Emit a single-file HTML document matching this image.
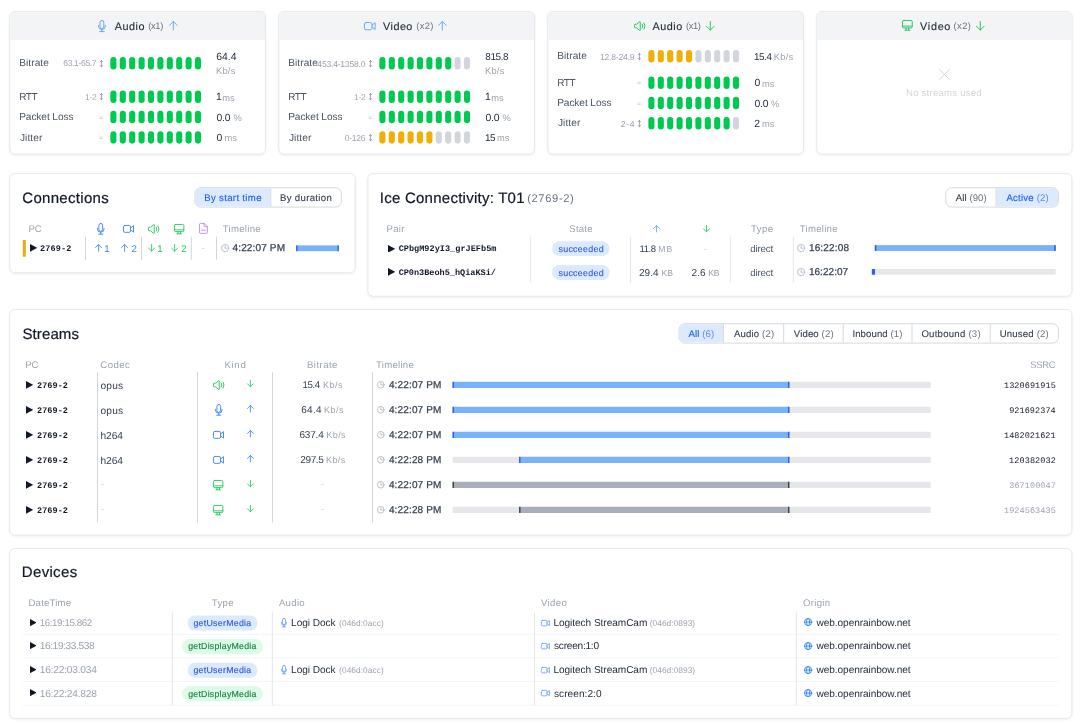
<!DOCTYPE html>
<html><head><meta charset="utf-8"><title>WebRTC dashboard</title>
<style>
html,body{margin:0;padding:0;background:#fff;}
body{width:1080px;height:725px;position:relative;overflow:hidden;font-family:"Liberation Sans",sans-serif;opacity:.999;}
.a{position:absolute;display:block;}
.t{white-space:nowrap;line-height:1;text-rendering:geometricPrecision;}
</style></head><body>
<svg class="a" style="left:7px;top:9px;filter:drop-shadow(0 1px 1px rgba(0,0,0,.06))" width="263" height="151"><rect x="2.8" y="2.4" width="255.7" height="142.7" rx="5" fill="#fff" stroke="#e6e8ec" stroke-width="1"/><path d="M3.3 30.8v-23.4a4.5 4.5 0 0 1 4.5 -4.5h245.7a4.5 4.5 0 0 1 4.5 4.5v23.4z" fill="#f3f4f6"/></svg>
<svg class="a" style="left:98px;top:19.87px;overflow:visible" width="7.8" height="12.06" viewBox="0 0 7.5 11.6" fill="none" stroke="#60a5fa" stroke-width="0.91" stroke-linecap="round" stroke-linejoin="round"><rect x="1.9" y="0.45" width="3.7" height="7.9" rx="1.85"/><path d="M0.45 5.3v0.6a3.3 3.3 0 0 0 6.6 0v-0.6M3.75 9.2v1.95M1.6 11.15h4.3"/></svg>
<span class="a t" id="t1" style="left:114.8px;top:21.52px;font-size:10.8px;color:#1f2937;-webkit-text-stroke:0.12px #1f2937;letter-spacing:0.52px;">Audio</span>
<span class="a t" id="t2" style="left:148.34px;top:21.74px;font-size:9.34px;color:#6b7280;letter-spacing:-0.38px;">(x1)</span>
<svg class="a" style="left:168.55px;top:21px;overflow:visible" width="8.6" height="9.6" viewBox="0 0 8.6 9.6" fill="none" stroke="#60a5fa" stroke-width="0.95" stroke-linecap="round" stroke-linejoin="round"><path d="M4.3 9.1V0.5M0.5 4.3L4.3 0.5L8.1 4.3"/></svg>
<span class="a t" id="t3" style="left:19.19px;top:58.57px;font-size:10.1px;color:#4b5563;letter-spacing:0.08px;">Bitrate</span>
<svg class="a" style="left:100.4px;top:59.6px;overflow:visible" width="2.9" height="7.3" viewBox="0 0 2.9 7.3" fill="none" stroke="#858b96" stroke-width="0.75" stroke-linecap="round" stroke-linejoin="round"><path d="M1.45 0.5v6.3M0.4 1.75L1.45 0.5L2.5 1.75M0.4 5.55L1.45 6.8L2.5 5.55"/></svg>
<span class="a t" id="t4" style="left:63.27px;top:59.33px;font-size:8.54px;color:#9ca3af;letter-spacing:-0.34px;">63.1-65.7</span>
<svg class="a" style="left:109px;top:56px" width="94" height="16"><rect x="1.35" y="1.05" width="6.1" height="12.5" rx="3.05" fill="#00c950"/><rect x="10.75" y="1.05" width="6.1" height="12.5" rx="3.05" fill="#00c950"/><rect x="20.15" y="1.05" width="6.1" height="12.5" rx="3.05" fill="#00c950"/><rect x="29.55" y="1.05" width="6.1" height="12.5" rx="3.05" fill="#00c950"/><rect x="38.95" y="1.05" width="6.1" height="12.5" rx="3.05" fill="#00c950"/><rect x="48.35" y="1.05" width="6.1" height="12.5" rx="3.05" fill="#00c950"/><rect x="57.75" y="1.05" width="6.1" height="12.5" rx="3.05" fill="#00c950"/><rect x="67.15" y="1.05" width="6.1" height="12.5" rx="3.05" fill="#00c950"/><rect x="76.55" y="1.05" width="6.1" height="12.5" rx="3.05" fill="#00c950"/><rect x="85.95" y="1.05" width="6.1" height="12.5" rx="3.05" fill="#00c950"/></svg>
<span class="a t" id="t5" style="left:216.18px;top:52.62px;font-size:10.4px;color:#1f2937;letter-spacing:0.05px;">64.4</span>
<span class="a t" id="t6" style="left:215.96px;top:66.71px;font-size:9.3px;color:#9ca3af;letter-spacing:0.24px;">Kb/s</span>
<span class="a t" id="t7" style="left:19.2px;top:92.6px;font-size:10.03px;color:#4b5563;letter-spacing:-0.4px;">RTT</span>
<svg class="a" style="left:100.4px;top:93.1px;overflow:visible" width="2.9" height="7.3" viewBox="0 0 2.9 7.3" fill="none" stroke="#858b96" stroke-width="0.75" stroke-linecap="round" stroke-linejoin="round"><path d="M1.45 0.5v6.3M0.4 1.75L1.45 0.5L2.5 1.75M0.4 5.55L1.45 6.8L2.5 5.55"/></svg>
<span class="a t" id="t8" style="left:85.11px;top:92.89px;font-size:8.42px;color:#9ca3af;letter-spacing:-0.34px;">1-2</span>
<svg class="a" style="left:109px;top:89px" width="94" height="16"><rect x="1.35" y="1.55" width="6.1" height="12.5" rx="3.05" fill="#00c950"/><rect x="10.75" y="1.55" width="6.1" height="12.5" rx="3.05" fill="#00c950"/><rect x="20.15" y="1.55" width="6.1" height="12.5" rx="3.05" fill="#00c950"/><rect x="29.55" y="1.55" width="6.1" height="12.5" rx="3.05" fill="#00c950"/><rect x="38.95" y="1.55" width="6.1" height="12.5" rx="3.05" fill="#00c950"/><rect x="48.35" y="1.55" width="6.1" height="12.5" rx="3.05" fill="#00c950"/><rect x="57.75" y="1.55" width="6.1" height="12.5" rx="3.05" fill="#00c950"/><rect x="67.15" y="1.55" width="6.1" height="12.5" rx="3.05" fill="#00c950"/><rect x="76.55" y="1.55" width="6.1" height="12.5" rx="3.05" fill="#00c950"/><rect x="85.95" y="1.55" width="6.1" height="12.5" rx="3.05" fill="#00c950"/></svg>
<span class="a t" id="t9" style="left:215.97px;top:92.92px;font-size:10.4px;color:#1f2937;">1</span>
<span class="a t" id="t10" style="left:222.24px;top:93.66px;font-size:9.3px;color:#9ca3af;letter-spacing:0.04px;">ms</span>
<span class="a t" id="t11" style="left:19.19px;top:112.62px;font-size:10.1px;color:#4b5563;letter-spacing:-0.07px;">Packet Loss</span>
<span class="a t" id="t12" style="left:99.34px;top:115.58px;font-size:6.6px;color:#b4b9c2;">=</span>
<svg class="a" style="left:109px;top:109px" width="94" height="16"><rect x="1.35" y="1.85" width="6.1" height="12.5" rx="3.05" fill="#00c950"/><rect x="10.75" y="1.85" width="6.1" height="12.5" rx="3.05" fill="#00c950"/><rect x="20.15" y="1.85" width="6.1" height="12.5" rx="3.05" fill="#00c950"/><rect x="29.55" y="1.85" width="6.1" height="12.5" rx="3.05" fill="#00c950"/><rect x="38.95" y="1.85" width="6.1" height="12.5" rx="3.05" fill="#00c950"/><rect x="48.35" y="1.85" width="6.1" height="12.5" rx="3.05" fill="#00c950"/><rect x="57.75" y="1.85" width="6.1" height="12.5" rx="3.05" fill="#00c950"/><rect x="67.15" y="1.85" width="6.1" height="12.5" rx="3.05" fill="#00c950"/><rect x="76.55" y="1.85" width="6.1" height="12.5" rx="3.05" fill="#00c950"/><rect x="85.95" y="1.85" width="6.1" height="12.5" rx="3.05" fill="#00c950"/></svg>
<span class="a t" id="t13" style="left:216.39px;top:113.72px;font-size:10.4px;color:#1f2937;letter-spacing:-0.09px;">0.0</span>
<span class="a t" id="t14" style="left:233.52px;top:113.71px;font-size:9.3px;color:#9ca3af;">%</span>
<span class="a t" id="t15" style="left:19.9px;top:133.67px;font-size:10.1px;color:#4b5563;letter-spacing:0.11px;">Jitter</span>
<span class="a t" id="t16" style="left:99.34px;top:135.63px;font-size:6.6px;color:#b4b9c2;">=</span>
<svg class="a" style="left:109px;top:130px" width="94" height="16"><rect x="1.35" y="1.15" width="6.1" height="12.5" rx="3.05" fill="#00c950"/><rect x="10.75" y="1.15" width="6.1" height="12.5" rx="3.05" fill="#00c950"/><rect x="20.15" y="1.15" width="6.1" height="12.5" rx="3.05" fill="#00c950"/><rect x="29.55" y="1.15" width="6.1" height="12.5" rx="3.05" fill="#00c950"/><rect x="38.95" y="1.15" width="6.1" height="12.5" rx="3.05" fill="#00c950"/><rect x="48.35" y="1.15" width="6.1" height="12.5" rx="3.05" fill="#00c950"/><rect x="57.75" y="1.15" width="6.1" height="12.5" rx="3.05" fill="#00c950"/><rect x="67.15" y="1.15" width="6.1" height="12.5" rx="3.05" fill="#00c950"/><rect x="76.55" y="1.15" width="6.1" height="12.5" rx="3.05" fill="#00c950"/><rect x="85.95" y="1.15" width="6.1" height="12.5" rx="3.05" fill="#00c950"/></svg>
<span class="a t" id="t17" style="left:216.39px;top:133.77px;font-size:10.4px;color:#1f2937;">0</span>
<span class="a t" id="t18" style="left:224.44px;top:134.26px;font-size:9.3px;color:#9ca3af;letter-spacing:0.04px;">ms</span>
<svg class="a" style="left:276px;top:9px;filter:drop-shadow(0 1px 1px rgba(0,0,0,.06))" width="263" height="151"><rect x="2.8" y="2.4" width="255.7" height="142.7" rx="5" fill="#fff" stroke="#e6e8ec" stroke-width="1"/><path d="M3.3 30.8v-23.4a4.5 4.5 0 0 1 4.5 -4.5h245.7a4.5 4.5 0 0 1 4.5 4.5v23.4z" fill="#f3f4f6"/></svg>
<svg class="a" style="left:363.77px;top:21.77px;overflow:visible" width="11.66" height="8.27" viewBox="0 0 11 7.8" fill="none" stroke="#60a5fa" stroke-width="0.9" stroke-linecap="round" stroke-linejoin="round"><rect x="0.45" y="0.45" width="7.1" height="6.9" rx="1.5"/><path d="M7.55 3.0L10.5 0.65V7.15L7.55 4.8"/></svg>
<span class="a t" id="t19" style="left:383px;top:21.52px;font-size:10.8px;color:#1f2937;-webkit-text-stroke:0.12px #1f2937;letter-spacing:0.49px;">Video</span>
<span class="a t" id="t20" style="left:416.24px;top:21.21px;font-size:9.4px;color:#6b7280;letter-spacing:0.36px;">(x2)</span>
<svg class="a" style="left:438.2px;top:21px;overflow:visible" width="8.6" height="9.6" viewBox="0 0 8.6 9.6" fill="none" stroke="#60a5fa" stroke-width="0.95" stroke-linecap="round" stroke-linejoin="round"><path d="M4.3 9.1V0.5M0.5 4.3L4.3 0.5L8.1 4.3"/></svg>
<span class="a t" id="t21" style="left:288.19px;top:58.57px;font-size:10.1px;color:#4b5563;letter-spacing:0.08px;">Bitrate</span>
<svg class="a" style="left:369.4px;top:59.6px;overflow:visible" width="2.9" height="7.3" viewBox="0 0 2.9 7.3" fill="none" stroke="#858b96" stroke-width="0.75" stroke-linecap="round" stroke-linejoin="round"><path d="M1.45 0.5v6.3M0.4 1.75L1.45 0.5L2.5 1.75M0.4 5.55L1.45 6.8L2.5 5.55"/></svg>
<span class="a t" id="t22" style="left:317.33px;top:59.55px;font-size:8.6px;color:#9ca3af;letter-spacing:-0.23px;">453.4-1358.0</span>
<svg class="a" style="left:378px;top:56px" width="94" height="16"><rect x="1.35" y="1.05" width="6.1" height="12.5" rx="3.05" fill="#00c950"/><rect x="10.75" y="1.05" width="6.1" height="12.5" rx="3.05" fill="#00c950"/><rect x="20.15" y="1.05" width="6.1" height="12.5" rx="3.05" fill="#00c950"/><rect x="29.55" y="1.05" width="6.1" height="12.5" rx="3.05" fill="#00c950"/><rect x="38.95" y="1.05" width="6.1" height="12.5" rx="3.05" fill="#00c950"/><rect x="48.35" y="1.05" width="6.1" height="12.5" rx="3.05" fill="#00c950"/><rect x="57.75" y="1.05" width="6.1" height="12.5" rx="3.05" fill="#00c950"/><rect x="67.15" y="1.05" width="6.1" height="12.5" rx="3.05" fill="#00c950"/><rect x="76.55" y="1.05" width="6.1" height="12.5" rx="3.05" fill="#d1d5dc"/><rect x="85.95" y="1.05" width="6.1" height="12.5" rx="3.05" fill="#d1d5dc"/></svg>
<span class="a t" id="t23" style="left:485.3px;top:52.59px;font-size:9.96px;color:#1f2937;letter-spacing:-0.42px;">815.8</span>
<span class="a t" id="t24" style="left:484.96px;top:66.71px;font-size:9.3px;color:#9ca3af;letter-spacing:0.24px;">Kb/s</span>
<span class="a t" id="t25" style="left:288.2px;top:92.6px;font-size:10.03px;color:#4b5563;letter-spacing:-0.4px;">RTT</span>
<svg class="a" style="left:369.4px;top:93.1px;overflow:visible" width="2.9" height="7.3" viewBox="0 0 2.9 7.3" fill="none" stroke="#858b96" stroke-width="0.75" stroke-linecap="round" stroke-linejoin="round"><path d="M1.45 0.5v6.3M0.4 1.75L1.45 0.5L2.5 1.75M0.4 5.55L1.45 6.8L2.5 5.55"/></svg>
<span class="a t" id="t26" style="left:354.11px;top:92.89px;font-size:8.42px;color:#9ca3af;letter-spacing:-0.34px;">1-2</span>
<svg class="a" style="left:378px;top:89px" width="94" height="16"><rect x="1.35" y="1.55" width="6.1" height="12.5" rx="3.05" fill="#00c950"/><rect x="10.75" y="1.55" width="6.1" height="12.5" rx="3.05" fill="#00c950"/><rect x="20.15" y="1.55" width="6.1" height="12.5" rx="3.05" fill="#00c950"/><rect x="29.55" y="1.55" width="6.1" height="12.5" rx="3.05" fill="#00c950"/><rect x="38.95" y="1.55" width="6.1" height="12.5" rx="3.05" fill="#00c950"/><rect x="48.35" y="1.55" width="6.1" height="12.5" rx="3.05" fill="#00c950"/><rect x="57.75" y="1.55" width="6.1" height="12.5" rx="3.05" fill="#00c950"/><rect x="67.15" y="1.55" width="6.1" height="12.5" rx="3.05" fill="#00c950"/><rect x="76.55" y="1.55" width="6.1" height="12.5" rx="3.05" fill="#00c950"/><rect x="85.95" y="1.55" width="6.1" height="12.5" rx="3.05" fill="#00c950"/></svg>
<span class="a t" id="t27" style="left:484.97px;top:92.92px;font-size:10.4px;color:#1f2937;">1</span>
<span class="a t" id="t28" style="left:491.24px;top:93.66px;font-size:9.3px;color:#9ca3af;letter-spacing:0.04px;">ms</span>
<span class="a t" id="t29" style="left:288.19px;top:112.62px;font-size:10.1px;color:#4b5563;letter-spacing:-0.07px;">Packet Loss</span>
<span class="a t" id="t30" style="left:368.34px;top:115.58px;font-size:6.6px;color:#b4b9c2;">=</span>
<svg class="a" style="left:378px;top:109px" width="94" height="16"><rect x="1.35" y="1.85" width="6.1" height="12.5" rx="3.05" fill="#00c950"/><rect x="10.75" y="1.85" width="6.1" height="12.5" rx="3.05" fill="#00c950"/><rect x="20.15" y="1.85" width="6.1" height="12.5" rx="3.05" fill="#00c950"/><rect x="29.55" y="1.85" width="6.1" height="12.5" rx="3.05" fill="#00c950"/><rect x="38.95" y="1.85" width="6.1" height="12.5" rx="3.05" fill="#00c950"/><rect x="48.35" y="1.85" width="6.1" height="12.5" rx="3.05" fill="#00c950"/><rect x="57.75" y="1.85" width="6.1" height="12.5" rx="3.05" fill="#00c950"/><rect x="67.15" y="1.85" width="6.1" height="12.5" rx="3.05" fill="#00c950"/><rect x="76.55" y="1.85" width="6.1" height="12.5" rx="3.05" fill="#00c950"/><rect x="85.95" y="1.85" width="6.1" height="12.5" rx="3.05" fill="#00c950"/></svg>
<span class="a t" id="t31" style="left:485.39px;top:113.72px;font-size:10.4px;color:#1f2937;letter-spacing:-0.09px;">0.0</span>
<span class="a t" id="t32" style="left:502.52px;top:113.71px;font-size:9.3px;color:#9ca3af;">%</span>
<span class="a t" id="t33" style="left:288.9px;top:133.67px;font-size:10.1px;color:#4b5563;letter-spacing:0.11px;">Jitter</span>
<svg class="a" style="left:369.4px;top:133.7px;overflow:visible" width="2.9" height="7.3" viewBox="0 0 2.9 7.3" fill="none" stroke="#858b96" stroke-width="0.75" stroke-linecap="round" stroke-linejoin="round"><path d="M1.45 0.5v6.3M0.4 1.75L1.45 0.5L2.5 1.75M0.4 5.55L1.45 6.8L2.5 5.55"/></svg>
<span class="a t" id="t34" style="left:344.74px;top:133.65px;font-size:8.6px;color:#9ca3af;letter-spacing:-0.31px;">0-126</span>
<svg class="a" style="left:378px;top:130px" width="94" height="16"><rect x="1.35" y="1.15" width="6.1" height="12.5" rx="3.05" fill="#efaf04"/><rect x="10.75" y="1.15" width="6.1" height="12.5" rx="3.05" fill="#efaf04"/><rect x="20.15" y="1.15" width="6.1" height="12.5" rx="3.05" fill="#efaf04"/><rect x="29.55" y="1.15" width="6.1" height="12.5" rx="3.05" fill="#efaf04"/><rect x="38.95" y="1.15" width="6.1" height="12.5" rx="3.05" fill="#efaf04"/><rect x="48.35" y="1.15" width="6.1" height="12.5" rx="3.05" fill="#efaf04"/><rect x="57.75" y="1.15" width="6.1" height="12.5" rx="3.05" fill="#d1d5dc"/><rect x="67.15" y="1.15" width="6.1" height="12.5" rx="3.05" fill="#d1d5dc"/><rect x="76.55" y="1.15" width="6.1" height="12.5" rx="3.05" fill="#d1d5dc"/><rect x="85.95" y="1.15" width="6.1" height="12.5" rx="3.05" fill="#d1d5dc"/></svg>
<span class="a t" id="t35" style="left:485.01px;top:133.52px;font-size:9.88px;color:#1f2937;letter-spacing:-0.45px;">15</span>
<span class="a t" id="t36" style="left:496.94px;top:133.51px;font-size:9.3px;color:#9ca3af;letter-spacing:0.04px;">ms</span>
<svg class="a" style="left:545px;top:9px;filter:drop-shadow(0 1px 1px rgba(0,0,0,.06))" width="263" height="151"><rect x="2.8" y="2.4" width="255.7" height="142.7" rx="5" fill="#fff" stroke="#e6e8ec" stroke-width="1"/><path d="M3.3 30.8v-23.4a4.5 4.5 0 0 1 4.5 -4.5h245.7a4.5 4.5 0 0 1 4.5 4.5v23.4z" fill="#f3f4f6"/></svg>
<svg class="a" style="left:633.65px;top:20.85px;overflow:visible" width="11.9" height="10.1" viewBox="0 0 11.9 10.1" fill="none" stroke="#22c55e" stroke-width="0.95" stroke-linecap="round" stroke-linejoin="round"><path d="M0.5 3.75a0.5 0.5 0 0 1 0.5-0.5h1.55L5.7 0.6a0.35 0.35 0 0 1 0.55 0.3v8.3a0.35 0.35 0 0 1-0.55 0.3L2.55 6.85H1a0.5 0.5 0 0 1-0.5-0.5z"/><path d="M8.3 3.1q1.25 1.95 0 3.9M10.0 1.9q2.3 3.15 0 6.3"/></svg>
<span class="a t" id="t37" style="left:652.5px;top:21.52px;font-size:10.8px;color:#1f2937;-webkit-text-stroke:0.12px #1f2937;letter-spacing:0.52px;">Audio</span>
<span class="a t" id="t38" style="left:685.94px;top:21.74px;font-size:9.34px;color:#6b7280;letter-spacing:-0.38px;">(x1)</span>
<svg class="a" style="left:706.3px;top:21px;overflow:visible" width="8.6" height="9.6" viewBox="0 0 8.6 9.6" fill="none" stroke="#22c55e" stroke-width="0.95" stroke-linecap="round" stroke-linejoin="round"><path d="M4.3 0.5V9.1M0.5 5.3L4.3 9.1L8.1 5.3"/></svg>
<span class="a t" id="t39" style="left:557.19px;top:51.57px;font-size:10.1px;color:#4b5563;letter-spacing:0.08px;">Bitrate</span>
<svg class="a" style="left:638.4px;top:52.6px;overflow:visible" width="2.9" height="7.3" viewBox="0 0 2.9 7.3" fill="none" stroke="#858b96" stroke-width="0.75" stroke-linecap="round" stroke-linejoin="round"><path d="M1.45 0.5v6.3M0.4 1.75L1.45 0.5L2.5 1.75M0.4 5.55L1.45 6.8L2.5 5.55"/></svg>
<span class="a t" id="t40" style="left:599.9px;top:52.55px;font-size:8.6px;color:#9ca3af;letter-spacing:-0.2px;">12.8-24.9</span>
<svg class="a" style="left:647px;top:49px" width="94" height="16"><rect x="1.35" y="1.05" width="6.1" height="12.5" rx="3.05" fill="#efaf04"/><rect x="10.75" y="1.05" width="6.1" height="12.5" rx="3.05" fill="#efaf04"/><rect x="20.15" y="1.05" width="6.1" height="12.5" rx="3.05" fill="#efaf04"/><rect x="29.55" y="1.05" width="6.1" height="12.5" rx="3.05" fill="#efaf04"/><rect x="38.95" y="1.05" width="6.1" height="12.5" rx="3.05" fill="#efaf04"/><rect x="48.35" y="1.05" width="6.1" height="12.5" rx="3.05" fill="#d1d5dc"/><rect x="57.75" y="1.05" width="6.1" height="12.5" rx="3.05" fill="#d1d5dc"/><rect x="67.15" y="1.05" width="6.1" height="12.5" rx="3.05" fill="#d1d5dc"/><rect x="76.55" y="1.05" width="6.1" height="12.5" rx="3.05" fill="#d1d5dc"/><rect x="85.95" y="1.05" width="6.1" height="12.5" rx="3.05" fill="#d1d5dc"/></svg>
<span class="a t" id="t41" style="left:754.01px;top:52.67px;font-size:9.88px;color:#1f2937;letter-spacing:-0.45px;">15.4</span>
<span class="a t" id="t42" style="left:773.76px;top:52.66px;font-size:9.3px;color:#9ca3af;letter-spacing:0.3px;">Kb/s</span>
<span class="a t" id="t43" style="left:557.2px;top:78.5px;font-size:10.03px;color:#4b5563;letter-spacing:-0.4px;">RTT</span>
<span class="a t" id="t44" style="left:637.34px;top:80.68px;font-size:6.6px;color:#b4b9c2;">=</span>
<svg class="a" style="left:647px;top:75px" width="94" height="16"><rect x="1.35" y="1.45" width="6.1" height="12.5" rx="3.05" fill="#00c950"/><rect x="10.75" y="1.45" width="6.1" height="12.5" rx="3.05" fill="#00c950"/><rect x="20.15" y="1.45" width="6.1" height="12.5" rx="3.05" fill="#00c950"/><rect x="29.55" y="1.45" width="6.1" height="12.5" rx="3.05" fill="#00c950"/><rect x="38.95" y="1.45" width="6.1" height="12.5" rx="3.05" fill="#00c950"/><rect x="48.35" y="1.45" width="6.1" height="12.5" rx="3.05" fill="#00c950"/><rect x="57.75" y="1.45" width="6.1" height="12.5" rx="3.05" fill="#00c950"/><rect x="67.15" y="1.45" width="6.1" height="12.5" rx="3.05" fill="#00c950"/><rect x="76.55" y="1.45" width="6.1" height="12.5" rx="3.05" fill="#00c950"/><rect x="85.95" y="1.45" width="6.1" height="12.5" rx="3.05" fill="#00c950"/></svg>
<span class="a t" id="t45" style="left:754.39px;top:78.82px;font-size:10.4px;color:#1f2937;">0</span>
<span class="a t" id="t46" style="left:761.94px;top:79.56px;font-size:9.3px;color:#9ca3af;letter-spacing:0.04px;">ms</span>
<span class="a t" id="t47" style="left:557.19px;top:98.52px;font-size:10.1px;color:#4b5563;letter-spacing:-0.07px;">Packet Loss</span>
<span class="a t" id="t48" style="left:637.34px;top:101.73px;font-size:6.6px;color:#b4b9c2;">=</span>
<svg class="a" style="left:647px;top:95px" width="94" height="16"><rect x="1.35" y="1.75" width="6.1" height="12.5" rx="3.05" fill="#00c950"/><rect x="10.75" y="1.75" width="6.1" height="12.5" rx="3.05" fill="#00c950"/><rect x="20.15" y="1.75" width="6.1" height="12.5" rx="3.05" fill="#00c950"/><rect x="29.55" y="1.75" width="6.1" height="12.5" rx="3.05" fill="#00c950"/><rect x="38.95" y="1.75" width="6.1" height="12.5" rx="3.05" fill="#00c950"/><rect x="48.35" y="1.75" width="6.1" height="12.5" rx="3.05" fill="#00c950"/><rect x="57.75" y="1.75" width="6.1" height="12.5" rx="3.05" fill="#00c950"/><rect x="67.15" y="1.75" width="6.1" height="12.5" rx="3.05" fill="#00c950"/><rect x="76.55" y="1.75" width="6.1" height="12.5" rx="3.05" fill="#00c950"/><rect x="85.95" y="1.75" width="6.1" height="12.5" rx="3.05" fill="#00c950"/></svg>
<span class="a t" id="t49" style="left:754.39px;top:99.62px;font-size:10.4px;color:#1f2937;letter-spacing:-0.09px;">0.0</span>
<span class="a t" id="t50" style="left:771.02px;top:99.61px;font-size:9.3px;color:#9ca3af;">%</span>
<span class="a t" id="t51" style="left:557.9px;top:118.57px;font-size:10.1px;color:#4b5563;letter-spacing:0.11px;">Jitter</span>
<svg class="a" style="left:638.4px;top:119.6px;overflow:visible" width="2.9" height="7.3" viewBox="0 0 2.9 7.3" fill="none" stroke="#858b96" stroke-width="0.75" stroke-linecap="round" stroke-linejoin="round"><path d="M1.45 0.5v6.3M0.4 1.75L1.45 0.5L2.5 1.75M0.4 5.55L1.45 6.8L2.5 5.55"/></svg>
<span class="a t" id="t52" style="left:620.77px;top:119.55px;font-size:8.6px;color:#9ca3af;letter-spacing:0.61px;">2-4</span>
<svg class="a" style="left:647px;top:116px" width="94" height="16"><rect x="1.35" y="1.05" width="6.1" height="12.5" rx="3.05" fill="#00c950"/><rect x="10.75" y="1.05" width="6.1" height="12.5" rx="3.05" fill="#00c950"/><rect x="20.15" y="1.05" width="6.1" height="12.5" rx="3.05" fill="#00c950"/><rect x="29.55" y="1.05" width="6.1" height="12.5" rx="3.05" fill="#00c950"/><rect x="38.95" y="1.05" width="6.1" height="12.5" rx="3.05" fill="#00c950"/><rect x="48.35" y="1.05" width="6.1" height="12.5" rx="3.05" fill="#00c950"/><rect x="57.75" y="1.05" width="6.1" height="12.5" rx="3.05" fill="#00c950"/><rect x="67.15" y="1.05" width="6.1" height="12.5" rx="3.05" fill="#00c950"/><rect x="76.55" y="1.05" width="6.1" height="12.5" rx="3.05" fill="#00c950"/><rect x="85.95" y="1.05" width="6.1" height="12.5" rx="3.05" fill="#d1d5dc"/></svg>
<span class="a t" id="t53" style="left:754.18px;top:119.92px;font-size:10.4px;color:#1f2937;">2</span>
<span class="a t" id="t54" style="left:761.94px;top:120.41px;font-size:9.3px;color:#9ca3af;letter-spacing:0.04px;">ms</span>
<svg class="a" style="left:814px;top:9px;filter:drop-shadow(0 1px 1px rgba(0,0,0,.06))" width="263" height="151"><rect x="2.8" y="2.4" width="255.2" height="142.7" rx="5" fill="#fff" stroke="#e6e8ec" stroke-width="1"/><path d="M3.3 30.8v-23.4a4.5 4.5 0 0 1 4.5 -4.5h245.2a4.5 4.5 0 0 1 4.5 4.5v23.4z" fill="#f3f4f6"/></svg>
<svg class="a" style="left:901.99px;top:20.44px;overflow:visible" width="10.71" height="10.71" viewBox="0 0 10.3 10.3" fill="none" stroke="#22c55e" stroke-width="0.91" stroke-linecap="round" stroke-linejoin="round"><rect x="0.45" y="0.45" width="9.4" height="7.2" rx="1.2"/><path d="M0.45 5.85h9.4M3.9 7.65v1.9M6.4 7.65v1.9M2.8 9.85h4.7"/></svg>
<span class="a t" id="t55" style="left:920px;top:21.52px;font-size:10.8px;color:#1f2937;-webkit-text-stroke:0.12px #1f2937;letter-spacing:0.74px;">Video</span>
<span class="a t" id="t56" style="left:953.44px;top:21.21px;font-size:9.4px;color:#6b7280;letter-spacing:0.46px;">(x2)</span>
<svg class="a" style="left:976.25px;top:21.15px;overflow:visible" width="8.6" height="9.6" viewBox="0 0 8.6 9.6" fill="none" stroke="#22c55e" stroke-width="0.95" stroke-linecap="round" stroke-linejoin="round"><path d="M4.3 0.5V9.1M0.5 5.3L4.3 9.1L8.1 5.3"/></svg>
<svg class="a" style="left:938.5px;top:69px;overflow:visible" width="11" height="11" viewBox="0 0 11 11" fill="none" stroke="#d1d5db" stroke-width="0.9" stroke-linecap="round" stroke-linejoin="round"><path d="M0.5 0.5L10.5 10.5M10.5 0.5L0.5 10.5"/></svg>
<span class="a t" id="t57" style="left:905.98px;top:88.66px;font-size:9.6px;color:#d1d5db;letter-spacing:0.23px;">No streams used</span>
<svg class="a" style="left:7px;top:171px;filter:drop-shadow(0 1px 1px rgba(0,0,0,.06))" width="353" height="107"><rect x="2.7" y="2.6" width="345.5" height="99.1" rx="5" fill="#fff" stroke="#e6e8ec" stroke-width="1"/></svg>
<span class="a t" id="t58" style="left:22.25px;top:190.62px;font-size:15px;color:#111827;-webkit-text-stroke:0.2px #111827;letter-spacing:0.31px;">Connections</span>
<svg class="a" style="left:193px;top:186px;" width="151" height="24"><rect x="1.9" y="1.7" width="146.5" height="19.4" rx="6" fill="#fff" stroke="#d6d9df" stroke-width="1"/></svg>
<svg class="a" style="left:194px;top:187px;" width="79" height="22"><path d="M6.9 1.2h69.4a0 0 0 0 1 0 0v18.4a0 0 0 0 1 0 0h-69.4a5.5 5.5 0 0 1 -5.5 -5.5v-7.4a5.5 5.5 0 0 1 5.5 -5.5z" fill="#dbeafe"/></svg>
<svg class="a" style="left:269px;top:187px;" width="5" height="22"><rect x="1.3" y="1.2" width="1" height="18.4" fill="#d6d9df"/></svg>
<span class="a t" id="t59" style="left:204.23px;top:193.56px;font-size:9.6px;color:#2563eb;-webkit-text-stroke:0.15px #2563eb;letter-spacing:0.33px;">By start time</span>
<span class="a t" id="t60" style="left:280.03px;top:193.56px;font-size:9.6px;color:#374151;-webkit-text-stroke:0.12px #374151;letter-spacing:0.32px;">By duration</span>
<span class="a t" id="t61" style="left:28.43px;top:224.66px;font-size:9.6px;color:#9ca3af;letter-spacing:-0.16px;">PC</span>
<svg class="a" style="left:96.9px;top:222.6px;overflow:visible" width="7.5" height="11.6" viewBox="0 0 7.5 11.6" fill="none" stroke="#3b82f6" stroke-width="0.9" stroke-linecap="round" stroke-linejoin="round"><rect x="1.9" y="0.45" width="3.7" height="7.9" rx="1.85"/><path d="M0.45 5.3v0.6a3.3 3.3 0 0 0 6.6 0v-0.6M3.75 9.2v1.95M1.6 11.15h4.3"/></svg>
<svg class="a" style="left:123.1px;top:224.9px;overflow:visible" width="11" height="7.8" viewBox="0 0 11 7.8" fill="none" stroke="#3b82f6" stroke-width="0.9" stroke-linecap="round" stroke-linejoin="round"><rect x="0.45" y="0.45" width="7.1" height="6.9" rx="1.5"/><path d="M7.55 3.0L10.5 0.65V7.15L7.55 4.8"/></svg>
<svg class="a" style="left:148px;top:223.8px;overflow:visible" width="11.9" height="10.1" viewBox="0 0 11.9 10.1" fill="none" stroke="#22c55e" stroke-width="0.9" stroke-linecap="round" stroke-linejoin="round"><path d="M0.5 3.75a0.5 0.5 0 0 1 0.5-0.5h1.55L5.7 0.6a0.35 0.35 0 0 1 0.55 0.3v8.3a0.35 0.35 0 0 1-0.55 0.3L2.55 6.85H1a0.5 0.5 0 0 1-0.5-0.5z"/><path d="M8.3 3.1q1.25 1.95 0 3.9M10.0 1.9q2.3 3.15 0 6.3"/></svg>
<svg class="a" style="left:173.7px;top:223.6px;overflow:visible" width="10.3" height="10.3" viewBox="0 0 10.3 10.3" fill="none" stroke="#22c55e" stroke-width="0.9" stroke-linecap="round" stroke-linejoin="round"><rect x="0.45" y="0.45" width="9.4" height="7.2" rx="1.2"/><path d="M0.45 5.85h9.4M3.9 7.65v1.9M6.4 7.65v1.9M2.8 9.85h4.7"/></svg>
<svg class="a" style="left:199.4px;top:223.1px;overflow:visible" width="8.8" height="10.8" viewBox="0 0 8.8 10.8" fill="none" stroke="#c084fc" stroke-width="0.9" stroke-linecap="round" stroke-linejoin="round"><path d="M0.45 1.45a1 1 0 0 1 1-1h3.7L8.35 3.65v5.7a1 1 0 0 1-1 1h-5.9a1 1 0 0 1-1-1z"/><path d="M5.15 0.45v2.2a1 1 0 0 0 1 1h2.2M2.7 7.2h3.6"/></svg>
<span class="a t" id="t62" style="left:222.81px;top:224.66px;font-size:9.6px;color:#9ca3af;letter-spacing:0.27px;">Timeline</span>
<svg class="a" style="left:21px;top:239px;" width="7" height="20"><rect x="1.8" y="1" width="3" height="16.7" fill="#eda812"/></svg>
<svg class="a" style="left:29.7px;top:244.45px" width="7.1" height="7.7" viewBox="0 0 10 10" preserveAspectRatio="none"><path d="M0 0L10 5L0 10z" fill="#111827"/></svg>
<span class="a t" id="t63" style="left:39.99px;top:244.69px;font-size:8.5px;color:#111827;font-family:'Liberation Mono',monospace;font-weight:bold;letter-spacing:0.13px;">2769-2</span>
<svg class="a" style="left:84px;top:235px;" width="5" height="27"><rect x="1" y="1.7" width="1" height="23" fill="#d1d5db"/></svg>
<svg class="a" style="left:140px;top:235px;" width="5" height="27"><rect x="1" y="1.7" width="1" height="23" fill="#d1d5db"/></svg>
<svg class="a" style="left:189px;top:235px;" width="5" height="27"><rect x="1.8" y="1.7" width="1" height="23" fill="#d1d5db"/></svg>
<svg class="a" style="left:215px;top:235px;" width="5" height="27"><rect x="1" y="1.7" width="1" height="23" fill="#d1d5db"/></svg>
<svg class="a" style="left:94.9px;top:244.2px;overflow:visible" width="7.2" height="7.7" viewBox="0 0 7.2 7.7" fill="none" stroke="#3b82f6" stroke-width="0.85" stroke-linecap="round" stroke-linejoin="round"><path d="M3.6 7.25V0.55M0.5 3.65L3.6 0.55L6.7 3.65"/></svg>
<span class="a t" id="t64" style="left:104.22px;top:244.71px;font-size:9.7px;color:#3b82f6;">1</span>
<svg class="a" style="left:121.45px;top:244.2px;overflow:visible" width="7.2" height="7.7" viewBox="0 0 7.2 7.7" fill="none" stroke="#3b82f6" stroke-width="0.85" stroke-linecap="round" stroke-linejoin="round"><path d="M3.6 7.25V0.55M0.5 3.65L3.6 0.55L6.7 3.65"/></svg>
<span class="a t" id="t65" style="left:131.51px;top:244.71px;font-size:9.7px;color:#3b82f6;">2</span>
<svg class="a" style="left:147.85px;top:244.2px;overflow:visible" width="7.2" height="7.7" viewBox="0 0 7.2 7.7" fill="none" stroke="#22c55e" stroke-width="0.85" stroke-linecap="round" stroke-linejoin="round"><path d="M3.6 0.45V7.15M0.5 4.05L3.6 7.15L6.7 4.05"/></svg>
<span class="a t" id="t66" style="left:157.32px;top:244.71px;font-size:9.7px;color:#22c55e;">1</span>
<svg class="a" style="left:171.45px;top:244.2px;overflow:visible" width="7.2" height="7.7" viewBox="0 0 7.2 7.7" fill="none" stroke="#22c55e" stroke-width="0.85" stroke-linecap="round" stroke-linejoin="round"><path d="M3.6 0.45V7.15M0.5 4.05L3.6 7.15L6.7 4.05"/></svg>
<span class="a t" id="t67" style="left:181.31px;top:244.71px;font-size:9.7px;color:#22c55e;">2</span>
<span class="a t" id="t68" style="left:201.6px;top:243.52px;font-size:10px;color:#d1d5db;">-</span>
<svg class="a" style="left:220.6px;top:243.95px;overflow:visible" width="8.1" height="8.1" viewBox="0 0 8.1 8.1" fill="none" stroke="#adb3bd" stroke-width="0.8" stroke-linecap="round" stroke-linejoin="round"><circle cx="4.05" cy="4.05" r="3.6"/><path d="M4.05 1.9v2.35h1.9"/></svg>
<span class="a t" id="t69" style="left:232.5px;top:243.52px;font-size:10px;color:#374151;-webkit-text-stroke:0.25px #374151;letter-spacing:0.15px;">4:22:07 PM</span>
<svg class="a" style="left:292px;top:244px" width="49" height="8"><rect x="4.2" y="1.4" width="42.6" height="5.8" fill="#78b2fb"/><rect x="4.2" y="1.4" width="1.3" height="5.8" fill="#2d5cf3"/><rect x="45.5" y="1.4" width="1.3" height="5.8" fill="#2d5cf3"/></svg>
<svg class="a" style="left:365px;top:171px;filter:drop-shadow(0 1px 1px rgba(0,0,0,.06))" width="711" height="131"><rect x="2.9" y="2.6" width="704" height="122.6" rx="5" fill="#fff" stroke="#e6e8ec" stroke-width="1"/></svg>
<span class="a t" id="t70" style="left:379.75px;top:190.62px;font-size:15px;color:#111827;-webkit-text-stroke:0.2px #111827;letter-spacing:0.25px;">Ice Connectivity: T01</span>
<span class="a t" id="t71" style="left:527.13px;top:193.58px;font-size:11.2px;color:#6b7280;letter-spacing:0.63px;">(2769-2)</span>
<svg class="a" style="left:944px;top:186px;" width="118" height="24"><rect x="1.8" y="1.7" width="112.7" height="19.4" rx="6" fill="#fff" stroke="#d6d9df" stroke-width="1"/></svg>
<svg class="a" style="left:995px;top:187px;" width="66" height="22"><path d="M1.6 1.2h55.9a5.5 5.5 0 0 1 5.5 5.5v7.4a5.5 5.5 0 0 1 -5.5 5.5h-55.9a0 0 0 0 1 0 0v-18.4a0 0 0 0 1 0 0z" fill="#dbeafe"/></svg>
<svg class="a" style="left:994px;top:187px;" width="5" height="22"><rect x="1.6" y="1.2" width="1" height="18.4" fill="#d6d9df"/></svg>
<span class="a t" id="t72" style="left:955.8px;top:193.56px;font-size:9.6px;color:#374151;-webkit-text-stroke:0.12px #374151;letter-spacing:0.06px;">All <span style="color:#6b7280;-webkit-text-stroke:0">(90)</span></span>
<span class="a t" id="t73" style="left:1006.4px;top:193.56px;font-size:9.6px;color:#2563eb;-webkit-text-stroke:0.15px #2563eb;letter-spacing:0.21px;">Active <span style="color:#5b8df0;-webkit-text-stroke:0">(2)</span></span>
<span class="a t" id="t74" style="left:386.53px;top:224.66px;font-size:9.6px;color:#9ca3af;letter-spacing:0.31px;">Pair</span>
<span class="a t" id="t75" style="left:569.37px;top:224.66px;font-size:9.6px;color:#9ca3af;letter-spacing:0.2px;">State</span>
<svg class="a" style="left:652.54px;top:224.9px;overflow:visible" width="6.91" height="7.39" viewBox="0 0 7.2 7.7" fill="none" stroke="#60a5fa" stroke-width="0.89" stroke-linecap="round" stroke-linejoin="round"><path d="M3.6 7.25V0.55M0.5 3.65L3.6 0.55L6.7 3.65"/></svg>
<svg class="a" style="left:702.54px;top:224.9px;overflow:visible" width="6.91" height="7.39" viewBox="0 0 7.2 7.7" fill="none" stroke="#22c55e" stroke-width="0.89" stroke-linecap="round" stroke-linejoin="round"><path d="M3.6 0.45V7.15M0.5 4.05L3.6 7.15L6.7 4.05"/></svg>
<span class="a t" id="t76" style="left:750.96px;top:224.66px;font-size:9.6px;color:#9ca3af;letter-spacing:0.48px;">Type</span>
<span class="a t" id="t77" style="left:799.81px;top:224.66px;font-size:9.6px;color:#9ca3af;letter-spacing:0.26px;">Timeline</span>
<svg class="a" style="left:529px;top:235px;" width="5" height="50"><rect x="1.2" y="1.6" width="1" height="46.2" fill="#e5e7eb"/></svg>
<svg class="a" style="left:629px;top:235px;" width="5" height="50"><rect x="1.1" y="1.6" width="1" height="46.2" fill="#e5e7eb"/></svg>
<svg class="a" style="left:729px;top:235px;" width="5" height="50"><rect x="1.1" y="1.6" width="1" height="46.2" fill="#e5e7eb"/></svg>
<svg class="a" style="left:791px;top:235px;" width="5" height="50"><rect x="1.8" y="1.6" width="1" height="46.2" fill="#e5e7eb"/></svg>
<svg class="a" style="left:387.8px;top:244.55px" width="7.1" height="7.7" viewBox="0 0 10 10" preserveAspectRatio="none"><path d="M0 0L10 5L0 10z" fill="#111827"/></svg>
<span class="a t" id="t78" style="left:398.64px;top:244.86px;font-size:8.55px;color:#111827;font-family:'Liberation Mono',monospace;font-weight:bold;letter-spacing:0.02px;">CPbgM92yI3_grJEFb5m</span>
<svg class="a" style="left:551px;top:240px;" width="61" height="19"><rect x="1.1" y="1.2" width="57.6" height="14.9" rx="7.45" fill="#dbeafe"/></svg>
<span class="a t" id="t79" style="left:558.42px;top:244.6px;font-size:8.9px;color:#2f5ae0;-webkit-text-stroke:0.12px #2f5ae0;letter-spacing:0.3px;">succeeded</span>
<span class="a t" id="t80" style="left:639.54px;top:244.66px;font-size:9.5px;color:#374151;letter-spacing:-0.43px;">11.8</span>
<span class="a t" id="t81" style="left:658.31px;top:245px;font-size:8.6px;color:#9ca3af;letter-spacing:0.99px;">MB</span>
<span class="a t" id="t82" style="left:703.85px;top:244.72px;font-size:10px;color:#d1d5db;">-</span>
<span class="a t" id="t83" style="left:750.26px;top:244.61px;font-size:9.8px;color:#4b5563;letter-spacing:-0.18px;">direct</span>
<svg class="a" style="left:797.25px;top:244px;overflow:visible" width="8.1" height="8.1" viewBox="0 0 8.1 8.1" fill="none" stroke="#adb3bd" stroke-width="0.8" stroke-linecap="round" stroke-linejoin="round"><circle cx="4.05" cy="4.05" r="3.6"/><path d="M4.05 1.9v2.35h1.9"/></svg>
<span class="a t" id="t84" style="left:808.9px;top:243.52px;font-size:10px;color:#374151;-webkit-text-stroke:0.25px #374151;letter-spacing:0.18px;">16:22:08</span>
<svg class="a" style="left:387.8px;top:267.95px" width="7.1" height="7.7" viewBox="0 0 10 10" preserveAspectRatio="none"><path d="M0 0L10 5L0 10z" fill="#111827"/></svg>
<span class="a t" id="t85" style="left:398.64px;top:268.51px;font-size:8.55px;color:#111827;font-family:'Liberation Mono',monospace;font-weight:bold;letter-spacing:-0.01px;">CP0n3Beoh5_hQiaKSi/</span>
<svg class="a" style="left:551px;top:264px;" width="61" height="18"><rect x="1.1" y="1" width="57.6" height="14.9" rx="7.45" fill="#dbeafe"/></svg>
<span class="a t" id="t86" style="left:558.42px;top:268.65px;font-size:8.9px;color:#2f5ae0;-webkit-text-stroke:0.12px #2f5ae0;letter-spacing:0.3px;">succeeded</span>
<span class="a t" id="t87" style="left:639px;top:268.56px;font-size:10px;color:#374151;letter-spacing:0.03px;">29.4</span>
<span class="a t" id="t88" style="left:661.41px;top:268.65px;font-size:8.6px;color:#9ca3af;letter-spacing:0.12px;">KB</span>
<span class="a t" id="t89" style="left:691.6px;top:268.56px;font-size:10px;color:#374151;letter-spacing:0.03px;">2.6</span>
<span class="a t" id="t90" style="left:708.21px;top:268.65px;font-size:8.6px;color:#9ca3af;letter-spacing:-0.18px;">KB</span>
<span class="a t" id="t91" style="left:750.26px;top:268.51px;font-size:9.8px;color:#4b5563;letter-spacing:-0.18px;">direct</span>
<svg class="a" style="left:797.25px;top:267.6px;overflow:visible" width="8.1" height="8.1" viewBox="0 0 8.1 8.1" fill="none" stroke="#adb3bd" stroke-width="0.8" stroke-linecap="round" stroke-linejoin="round"><circle cx="4.05" cy="4.05" r="3.6"/><path d="M4.05 1.9v2.35h1.9"/></svg>
<span class="a t" id="t92" style="left:808.9px;top:267.67px;font-size:10px;color:#374151;-webkit-text-stroke:0.25px #374151;letter-spacing:0.05px;">16:22:07</span>
<svg class="a" style="left:870px;top:244px" width="188" height="8"><rect x="4.8" y="1.15" width="180.9" height="5.8" fill="#78b2fb"/><rect x="4.8" y="1.15" width="1.5" height="5.8" fill="#2d5cf3"/><rect x="184.2" y="1.15" width="1.5" height="5.8" fill="#2d5cf3"/></svg>
<svg class="a" style="left:870px;top:267px" width="188" height="8"><rect x="4.8" y="1.9" width="180.9" height="5.8" rx="0.6" fill="#e5e7eb"/></svg>
<svg class="a" style="left:870px;top:267px;" width="8" height="10"><rect x="1.8" y="1.9" width="3.2" height="5.8" rx="0.5" fill="#2d5cf3"/></svg>
<svg class="a" style="left:7px;top:307px;filter:drop-shadow(0 1px 1px rgba(0,0,0,.06))" width="1069" height="234"><rect x="2.7" y="2.5" width="1062.2" height="225.7" rx="5" fill="#fff" stroke="#e6e8ec" stroke-width="1"/></svg>
<span class="a t" id="t93" style="left:22.4px;top:326.67px;font-size:15px;color:#111827;-webkit-text-stroke:0.2px #111827;letter-spacing:0.12px;">Streams</span>
<svg class="a" style="left:677px;top:322px;" width="385" height="24"><rect x="2" y="1.7" width="379.5" height="19.4" rx="6" fill="#fff" stroke="#d6d9df" stroke-width="1"/></svg>
<svg class="a" style="left:678px;top:323px;" width="47" height="22"><path d="M7 1.2h37.9a0 0 0 0 1 0 0v18.4a0 0 0 0 1 0 0h-37.9a5.5 5.5 0 0 1 -5.5 -5.5v-7.4a5.5 5.5 0 0 1 5.5 -5.5z" fill="#dbeafe"/></svg>
<svg class="a" style="left:721px;top:323px;" width="5" height="22"><rect x="1.9" y="1.2" width="1" height="18.4" fill="#d6d9df"/></svg>
<svg class="a" style="left:782px;top:323px;" width="5" height="22"><rect x="1.2" y="1.2" width="1" height="18.4" fill="#d6d9df"/></svg>
<svg class="a" style="left:841px;top:323px;" width="5" height="22"><rect x="1.7" y="1.2" width="1" height="18.4" fill="#d6d9df"/></svg>
<svg class="a" style="left:910px;top:323px;" width="5" height="22"><rect x="1.5" y="1.2" width="1" height="18.4" fill="#d6d9df"/></svg>
<svg class="a" style="left:988px;top:323px;" width="5" height="22"><rect x="1.7" y="1.2" width="1" height="18.4" fill="#d6d9df"/></svg>
<span class="a t" id="t94" style="left:688.4px;top:329.56px;font-size:9.6px;color:#2563eb;-webkit-text-stroke:0.15px #2563eb;letter-spacing:0.12px;">All <span style="color:#5b8df0;-webkit-text-stroke:0">(6)</span></span>
<span class="a t" id="t95" style="left:733.9px;top:329.56px;font-size:9.6px;color:#374151;-webkit-text-stroke:0.12px #374151;letter-spacing:0.16px;">Audio <span style="color:#6b7280;-webkit-text-stroke:0">(2)</span></span>
<span class="a t" id="t96" style="left:793.8px;top:329.56px;font-size:9.6px;color:#374151;-webkit-text-stroke:0.12px #374151;letter-spacing:0.13px;">Video <span style="color:#6b7280;-webkit-text-stroke:0">(2)</span></span>
<span class="a t" id="t97" style="left:852.44px;top:329.56px;font-size:9.6px;color:#374151;-webkit-text-stroke:0.12px #374151;letter-spacing:0.09px;">Inbound <span style="color:#6b7280;-webkit-text-stroke:0">(1)</span></span>
<span class="a t" id="t98" style="left:921.42px;top:329.56px;font-size:9.6px;color:#374151;-webkit-text-stroke:0.12px #374151;letter-spacing:0.24px;">Outbound <span style="color:#6b7280;-webkit-text-stroke:0">(3)</span></span>
<span class="a t" id="t99" style="left:999.63px;top:329.56px;font-size:9.6px;color:#374151;-webkit-text-stroke:0.12px #374151;letter-spacing:0.18px;">Unused <span style="color:#6b7280;-webkit-text-stroke:0">(2)</span></span>
<span class="a t" id="t100" style="left:25.23px;top:360.56px;font-size:9.6px;color:#9ca3af;letter-spacing:-0.06px;">PC</span>
<span class="a t" id="t101" style="left:100.32px;top:360.56px;font-size:9.6px;color:#9ca3af;letter-spacing:0.41px;">Codec</span>
<span class="a t" id="t102" style="left:224.43px;top:360.56px;font-size:9.6px;color:#9ca3af;letter-spacing:0.7px;">Kind</span>
<span class="a t" id="t103" style="left:307.03px;top:360.56px;font-size:9.6px;color:#9ca3af;letter-spacing:0.43px;">Bitrate</span>
<span class="a t" id="t104" style="left:376.01px;top:360.56px;font-size:9.6px;color:#9ca3af;letter-spacing:0.26px;">Timeline</span>
<span class="a t" id="t105" style="left:1030.32px;top:360.62px;font-size:9.48px;color:#9ca3af;letter-spacing:-0.38px;">SSRC</span>
<svg class="a" style="left:96px;top:371px;" width="5" height="154"><rect x="1" y="1.3" width="1" height="150" fill="#d1d5db"/></svg>
<svg class="a" style="left:196px;top:371px;" width="5" height="154"><rect x="1" y="1.3" width="1" height="150" fill="#d1d5db"/></svg>
<svg class="a" style="left:271px;top:371px;" width="5" height="154"><rect x="1" y="1.3" width="1" height="150" fill="#d1d5db"/></svg>
<svg class="a" style="left:371px;top:371px;" width="5" height="154"><rect x="1" y="1.3" width="1" height="150" fill="#d1d5db"/></svg>
<svg class="a" style="left:26.2px;top:380.95px" width="7.1" height="7.7" viewBox="0 0 10 10" preserveAspectRatio="none"><path d="M0 0L10 5L0 10z" fill="#111827"/></svg>
<span class="a t" id="t106" style="left:36.99px;top:381.69px;font-size:8.5px;color:#111827;font-family:'Liberation Mono',monospace;font-weight:bold;letter-spacing:0.07px;">2769-2</span>
<span class="a t" id="t107" style="left:100.59px;top:381.62px;font-size:10.2px;color:#374151;letter-spacing:0.13px;">opus</span>
<svg class="a" style="left:212.65px;top:379.95px;overflow:visible" width="11.9" height="10.1" viewBox="0 0 11.9 10.1" fill="none" stroke="#22c55e" stroke-width="0.9" stroke-linecap="round" stroke-linejoin="round"><path d="M0.5 3.75a0.5 0.5 0 0 1 0.5-0.5h1.55L5.7 0.6a0.35 0.35 0 0 1 0.55 0.3v8.3a0.35 0.35 0 0 1-0.55 0.3L2.55 6.85H1a0.5 0.5 0 0 1-0.5-0.5z"/><path d="M8.3 3.1q1.25 1.95 0 3.9M10.0 1.9q2.3 3.15 0 6.3"/></svg>
<svg class="a" style="left:247.43px;top:380.09px;overflow:visible" width="6.84" height="7.31" viewBox="0 0 7.2 7.7" fill="none" stroke="#22c55e" stroke-width="0.89" stroke-linecap="round" stroke-linejoin="round"><path d="M3.6 0.45V7.15M0.5 4.05L3.6 7.15L6.7 4.05"/></svg>
<span class="a t" id="t108" style="left:302.42px;top:380.7px;font-size:9.73px;color:#374151;letter-spacing:-0.4px;">15.4</span>
<span class="a t" id="t109" style="left:323.08px;top:380.5px;font-size:9px;color:#9ca3af;letter-spacing:0.43px;">Kb/s</span>
<svg class="a" style="left:376.63px;top:380.93px;overflow:visible" width="7.53" height="7.53" viewBox="0 0 8.1 8.1" fill="none" stroke="#adb3bd" stroke-width="0.86" stroke-linecap="round" stroke-linejoin="round"><circle cx="4.05" cy="4.05" r="3.6"/><path d="M4.05 1.9v2.35h1.9"/></svg>
<span class="a t" id="t110" style="left:388.9px;top:380.67px;font-size:10px;color:#374151;-webkit-text-stroke:0.25px #374151;letter-spacing:0.15px;">4:22:07 PM</span>
<svg class="a" style="left:448px;top:380px" width="485" height="9"><rect x="4.6" y="1.8" width="478.1" height="6.2" rx="0.6" fill="#e5e7eb"/><rect x="4.6" y="1.8" width="336.8" height="6.2" fill="#78b2fb"/><rect x="4.6" y="1.8" width="1.4" height="6.2" fill="#2d5cf3"/><rect x="340" y="1.8" width="1.4" height="6.2" fill="#2d5cf3"/></svg>
<span class="a t" id="t111" style="left:1004px;top:381.54px;font-size:8.5px;color:#111827;font-family:'Liberation Mono',monospace;letter-spacing:0.08px;">1320691915</span>
<svg class="a" style="left:26.2px;top:405.95px" width="7.1" height="7.7" viewBox="0 0 10 10" preserveAspectRatio="none"><path d="M0 0L10 5L0 10z" fill="#111827"/></svg>
<span class="a t" id="t112" style="left:36.99px;top:406.69px;font-size:8.5px;color:#111827;font-family:'Liberation Mono',monospace;font-weight:bold;letter-spacing:0.07px;">2769-2</span>
<span class="a t" id="t113" style="left:100.59px;top:406.62px;font-size:10.2px;color:#374151;letter-spacing:0.13px;">opus</span>
<svg class="a" style="left:214.75px;top:404.2px;overflow:visible" width="7.5" height="11.6" viewBox="0 0 7.5 11.6" fill="none" stroke="#3b82f6" stroke-width="0.9" stroke-linecap="round" stroke-linejoin="round"><rect x="1.9" y="0.45" width="3.7" height="7.9" rx="1.85"/><path d="M0.45 5.3v0.6a3.3 3.3 0 0 0 6.6 0v-0.6M3.75 9.2v1.95M1.6 11.15h4.3"/></svg>
<svg class="a" style="left:247.43px;top:405.09px;overflow:visible" width="6.84" height="7.31" viewBox="0 0 7.2 7.7" fill="none" stroke="#3b82f6" stroke-width="0.89" stroke-linecap="round" stroke-linejoin="round"><path d="M3.6 7.25V0.55M0.5 3.65L3.6 0.55L6.7 3.65"/></svg>
<span class="a t" id="t114" style="left:301.2px;top:405.56px;font-size:10px;color:#374151;letter-spacing:0.33px;">64.4</span>
<span class="a t" id="t115" style="left:324.08px;top:405.5px;font-size:9px;color:#9ca3af;letter-spacing:0.43px;">Kb/s</span>
<svg class="a" style="left:376.63px;top:405.93px;overflow:visible" width="7.53" height="7.53" viewBox="0 0 8.1 8.1" fill="none" stroke="#adb3bd" stroke-width="0.86" stroke-linecap="round" stroke-linejoin="round"><circle cx="4.05" cy="4.05" r="3.6"/><path d="M4.05 1.9v2.35h1.9"/></svg>
<span class="a t" id="t116" style="left:388.9px;top:405.67px;font-size:10px;color:#374151;-webkit-text-stroke:0.25px #374151;letter-spacing:0.15px;">4:22:07 PM</span>
<svg class="a" style="left:448px;top:405px" width="485" height="9"><rect x="4.6" y="1.8" width="478.1" height="6.2" rx="0.6" fill="#e5e7eb"/><rect x="4.6" y="1.8" width="336.8" height="6.2" fill="#78b2fb"/><rect x="4.6" y="1.8" width="1.4" height="6.2" fill="#2d5cf3"/><rect x="340" y="1.8" width="1.4" height="6.2" fill="#2d5cf3"/></svg>
<span class="a t" id="t117" style="left:1009.19px;top:406.54px;font-size:8.5px;color:#111827;font-family:'Liberation Mono',monospace;letter-spacing:0.07px;">921692374</span>
<svg class="a" style="left:26.2px;top:430.95px" width="7.1" height="7.7" viewBox="0 0 10 10" preserveAspectRatio="none"><path d="M0 0L10 5L0 10z" fill="#111827"/></svg>
<span class="a t" id="t118" style="left:36.99px;top:431.69px;font-size:8.5px;color:#111827;font-family:'Liberation Mono',monospace;font-weight:bold;letter-spacing:0.07px;">2769-2</span>
<span class="a t" id="t119" style="left:100.39px;top:431.62px;font-size:10.2px;color:#374151;">h264</span>
<svg class="a" style="left:212.85px;top:431.1px;overflow:visible" width="11" height="7.8" viewBox="0 0 11 7.8" fill="none" stroke="#3b82f6" stroke-width="0.9" stroke-linecap="round" stroke-linejoin="round"><rect x="0.45" y="0.45" width="7.1" height="6.9" rx="1.5"/><path d="M7.55 3.0L10.5 0.65V7.15L7.55 4.8"/></svg>
<svg class="a" style="left:247.43px;top:430.09px;overflow:visible" width="6.84" height="7.31" viewBox="0 0 7.2 7.7" fill="none" stroke="#3b82f6" stroke-width="0.89" stroke-linecap="round" stroke-linejoin="round"><path d="M3.6 7.25V0.55M0.5 3.65L3.6 0.55L6.7 3.65"/></svg>
<span class="a t" id="t120" style="left:299.4px;top:430.56px;font-size:10px;color:#374151;letter-spacing:-0.17px;">637.4</span>
<span class="a t" id="t121" style="left:326.28px;top:430.5px;font-size:9px;color:#9ca3af;letter-spacing:0.43px;">Kb/s</span>
<svg class="a" style="left:376.63px;top:430.93px;overflow:visible" width="7.53" height="7.53" viewBox="0 0 8.1 8.1" fill="none" stroke="#adb3bd" stroke-width="0.86" stroke-linecap="round" stroke-linejoin="round"><circle cx="4.05" cy="4.05" r="3.6"/><path d="M4.05 1.9v2.35h1.9"/></svg>
<span class="a t" id="t122" style="left:388.9px;top:430.67px;font-size:10px;color:#374151;-webkit-text-stroke:0.25px #374151;letter-spacing:0.15px;">4:22:07 PM</span>
<svg class="a" style="left:448px;top:430px" width="485" height="9"><rect x="4.6" y="1.8" width="478.1" height="6.2" rx="0.6" fill="#e5e7eb"/><rect x="4.6" y="1.8" width="336.8" height="6.2" fill="#78b2fb"/><rect x="4.6" y="1.8" width="1.4" height="6.2" fill="#2d5cf3"/><rect x="340" y="1.8" width="1.4" height="6.2" fill="#2d5cf3"/></svg>
<span class="a t" id="t123" style="left:1004px;top:431.54px;font-size:8.5px;color:#111827;font-family:'Liberation Mono',monospace;letter-spacing:0.06px;">1482021621</span>
<svg class="a" style="left:26.2px;top:455.95px" width="7.1" height="7.7" viewBox="0 0 10 10" preserveAspectRatio="none"><path d="M0 0L10 5L0 10z" fill="#111827"/></svg>
<span class="a t" id="t124" style="left:36.99px;top:456.69px;font-size:8.5px;color:#111827;font-family:'Liberation Mono',monospace;font-weight:bold;letter-spacing:0.07px;">2769-2</span>
<span class="a t" id="t125" style="left:100.39px;top:456.62px;font-size:10.2px;color:#374151;">h264</span>
<svg class="a" style="left:212.85px;top:456.1px;overflow:visible" width="11" height="7.8" viewBox="0 0 11 7.8" fill="none" stroke="#3b82f6" stroke-width="0.9" stroke-linecap="round" stroke-linejoin="round"><rect x="0.45" y="0.45" width="7.1" height="6.9" rx="1.5"/><path d="M7.55 3.0L10.5 0.65V7.15L7.55 4.8"/></svg>
<svg class="a" style="left:247.43px;top:455.09px;overflow:visible" width="6.84" height="7.31" viewBox="0 0 7.2 7.7" fill="none" stroke="#3b82f6" stroke-width="0.89" stroke-linecap="round" stroke-linejoin="round"><path d="M3.6 7.25V0.55M0.5 3.65L3.6 0.55L6.7 3.65"/></svg>
<span class="a t" id="t126" style="left:300.3px;top:455.56px;font-size:10px;color:#374151;letter-spacing:-0.39px;">297.5</span>
<span class="a t" id="t127" style="left:325.98px;top:455.5px;font-size:9px;color:#9ca3af;letter-spacing:0.43px;">Kb/s</span>
<svg class="a" style="left:376.63px;top:455.93px;overflow:visible" width="7.53" height="7.53" viewBox="0 0 8.1 8.1" fill="none" stroke="#adb3bd" stroke-width="0.86" stroke-linecap="round" stroke-linejoin="round"><circle cx="4.05" cy="4.05" r="3.6"/><path d="M4.05 1.9v2.35h1.9"/></svg>
<span class="a t" id="t128" style="left:388.9px;top:455.67px;font-size:10px;color:#374151;-webkit-text-stroke:0.25px #374151;letter-spacing:0.15px;">4:22:28 PM</span>
<svg class="a" style="left:448px;top:455px" width="485" height="9"><rect x="4.6" y="1.8" width="478.1" height="6.2" rx="0.6" fill="#e5e7eb"/><rect x="71.1" y="1.8" width="270.3" height="6.2" fill="#78b2fb"/><rect x="71.1" y="1.8" width="1.4" height="6.2" fill="#2d5cf3"/><rect x="340" y="1.8" width="1.4" height="6.2" fill="#2d5cf3"/></svg>
<span class="a t" id="t129" style="left:1009.11px;top:456.54px;font-size:8.5px;color:#111827;font-family:'Liberation Mono',monospace;letter-spacing:0.1px;">120382032</span>
<svg class="a" style="left:26.2px;top:480.95px" width="7.1" height="7.7" viewBox="0 0 10 10" preserveAspectRatio="none"><path d="M0 0L10 5L0 10z" fill="#111827"/></svg>
<span class="a t" id="t130" style="left:36.99px;top:481.69px;font-size:8.5px;color:#111827;font-family:'Liberation Mono',monospace;font-weight:bold;letter-spacing:0.07px;">2769-2</span>
<span class="a t" id="t131" style="left:101.1px;top:479.52px;font-size:10px;color:#d1d5db;">-</span>
<svg class="a" style="left:213.3px;top:479.85px;overflow:visible" width="10.3" height="10.3" viewBox="0 0 10.3 10.3" fill="none" stroke="#22c55e" stroke-width="0.9" stroke-linecap="round" stroke-linejoin="round"><rect x="0.45" y="0.45" width="9.4" height="7.2" rx="1.2"/><path d="M0.45 5.85h9.4M3.9 7.65v1.9M6.4 7.65v1.9M2.8 9.85h4.7"/></svg>
<svg class="a" style="left:247.43px;top:480.09px;overflow:visible" width="6.84" height="7.31" viewBox="0 0 7.2 7.7" fill="none" stroke="#22c55e" stroke-width="0.89" stroke-linecap="round" stroke-linejoin="round"><path d="M3.6 0.45V7.15M0.5 4.05L3.6 7.15L6.7 4.05"/></svg>
<span class="a t" id="t132" style="left:320.75px;top:479.52px;font-size:10px;color:#d1d5db;">-</span>
<svg class="a" style="left:376.63px;top:480.93px;overflow:visible" width="7.53" height="7.53" viewBox="0 0 8.1 8.1" fill="none" stroke="#adb3bd" stroke-width="0.86" stroke-linecap="round" stroke-linejoin="round"><circle cx="4.05" cy="4.05" r="3.6"/><path d="M4.05 1.9v2.35h1.9"/></svg>
<span class="a t" id="t133" style="left:388.9px;top:480.67px;font-size:10px;color:#374151;-webkit-text-stroke:0.25px #374151;letter-spacing:0.15px;">4:22:07 PM</span>
<svg class="a" style="left:448px;top:480px" width="485" height="9"><rect x="4.6" y="1.8" width="478.1" height="6.2" rx="0.6" fill="#e5e7eb"/><rect x="4.6" y="1.8" width="336.8" height="6.2" fill="#a9afba"/><rect x="4.6" y="1.8" width="1.4" height="6.2" fill="#3d434d"/><rect x="340" y="1.8" width="1.4" height="6.2" fill="#3d434d"/></svg>
<span class="a t" id="t134" style="left:1009.19px;top:481.54px;font-size:8.5px;color:#9ca3af;font-family:'Liberation Mono',monospace;letter-spacing:0.09px;">367100047</span>
<svg class="a" style="left:26.2px;top:505.95px" width="7.1" height="7.7" viewBox="0 0 10 10" preserveAspectRatio="none"><path d="M0 0L10 5L0 10z" fill="#111827"/></svg>
<span class="a t" id="t135" style="left:36.99px;top:506.69px;font-size:8.5px;color:#111827;font-family:'Liberation Mono',monospace;font-weight:bold;letter-spacing:0.07px;">2769-2</span>
<span class="a t" id="t136" style="left:101.1px;top:504.52px;font-size:10px;color:#d1d5db;">-</span>
<svg class="a" style="left:213.3px;top:504.85px;overflow:visible" width="10.3" height="10.3" viewBox="0 0 10.3 10.3" fill="none" stroke="#22c55e" stroke-width="0.9" stroke-linecap="round" stroke-linejoin="round"><rect x="0.45" y="0.45" width="9.4" height="7.2" rx="1.2"/><path d="M0.45 5.85h9.4M3.9 7.65v1.9M6.4 7.65v1.9M2.8 9.85h4.7"/></svg>
<svg class="a" style="left:247.43px;top:505.09px;overflow:visible" width="6.84" height="7.31" viewBox="0 0 7.2 7.7" fill="none" stroke="#22c55e" stroke-width="0.89" stroke-linecap="round" stroke-linejoin="round"><path d="M3.6 0.45V7.15M0.5 4.05L3.6 7.15L6.7 4.05"/></svg>
<span class="a t" id="t137" style="left:320.75px;top:504.52px;font-size:10px;color:#d1d5db;">-</span>
<svg class="a" style="left:376.63px;top:505.93px;overflow:visible" width="7.53" height="7.53" viewBox="0 0 8.1 8.1" fill="none" stroke="#adb3bd" stroke-width="0.86" stroke-linecap="round" stroke-linejoin="round"><circle cx="4.05" cy="4.05" r="3.6"/><path d="M4.05 1.9v2.35h1.9"/></svg>
<span class="a t" id="t138" style="left:388.9px;top:505.67px;font-size:10px;color:#374151;-webkit-text-stroke:0.25px #374151;letter-spacing:0.15px;">4:22:28 PM</span>
<svg class="a" style="left:448px;top:505px" width="485" height="9"><rect x="4.6" y="1.8" width="478.1" height="6.2" rx="0.6" fill="#e5e7eb"/><rect x="71.1" y="1.8" width="270.3" height="6.2" fill="#a9afba"/><rect x="71.1" y="1.8" width="1.4" height="6.2" fill="#3d434d"/><rect x="340" y="1.8" width="1.4" height="6.2" fill="#3d434d"/></svg>
<span class="a t" id="t139" style="left:1004px;top:506.54px;font-size:8.5px;color:#9ca3af;font-family:'Liberation Mono',monospace;letter-spacing:0.08px;">1924563435</span>
<svg class="a" style="left:7px;top:546px;filter:drop-shadow(0 1px 1px rgba(0,0,0,.06))" width="1069" height="178"><rect x="2.7" y="2.5" width="1062.2" height="169.8" rx="5" fill="#fff" stroke="#e6e8ec" stroke-width="1"/></svg>
<span class="a t" id="t140" style="left:21.8px;top:564.67px;font-size:15px;color:#111827;-webkit-text-stroke:0.2px #111827;letter-spacing:0.33px;">Devices</span>
<span class="a t" id="t141" style="left:28.53px;top:598.56px;font-size:9.6px;color:#9ca3af;letter-spacing:0.18px;">DateTime</span>
<span class="a t" id="t142" style="left:211.71px;top:598.56px;font-size:9.6px;color:#9ca3af;letter-spacing:0.38px;">Type</span>
<span class="a t" id="t143" style="left:278.9px;top:598.56px;font-size:9.6px;color:#9ca3af;letter-spacing:0.32px;">Audio</span>
<span class="a t" id="t144" style="left:541px;top:598.56px;font-size:9.6px;color:#9ca3af;letter-spacing:0.37px;">Video</span>
<span class="a t" id="t145" style="left:803.12px;top:598.56px;font-size:9.6px;color:#9ca3af;letter-spacing:0.26px;">Origin</span>
<svg class="a" style="left:21px;top:632px;" width="1040" height="5"><rect x="1.5" y="1.8" width="1036" height="1" fill="#f3f4f6"/></svg>
<svg class="a" style="left:21px;top:656px;" width="1040" height="5"><rect x="1.5" y="1.4" width="1036" height="1" fill="#f3f4f6"/></svg>
<svg class="a" style="left:21px;top:679px;" width="1040" height="5"><rect x="1.5" y="1.9" width="1036" height="1" fill="#f3f4f6"/></svg>
<svg class="a" style="left:21px;top:703px;" width="1040" height="5"><rect x="1.5" y="1.7" width="1036" height="1" fill="#f3f4f6"/></svg>
<svg class="a" style="left:170px;top:610px;" width="5" height="98"><rect x="1.8" y="1.7" width="1" height="93.5" fill="#e5e7eb"/></svg>
<svg class="a" style="left:270px;top:610px;" width="5" height="98"><rect x="1.8" y="1.7" width="1" height="93.5" fill="#e5e7eb"/></svg>
<svg class="a" style="left:533px;top:610px;" width="5" height="98"><rect x="1" y="1.7" width="1" height="93.5" fill="#e5e7eb"/></svg>
<svg class="a" style="left:794px;top:610px;" width="5" height="98"><rect x="1.8" y="1.7" width="1" height="93.5" fill="#e5e7eb"/></svg>
<svg class="a" style="left:29.6px;top:618.6px" width="6.7" height="7.2" viewBox="0 0 10 10" preserveAspectRatio="none"><path d="M0 0L10 5L0 10z" fill="#111827"/></svg>
<span class="a t" id="t146" style="left:39.72px;top:618.62px;font-size:9.78px;color:#9ca3af;letter-spacing:-0.41px;">16:19:15.862</span>
<svg class="a" style="left:186px;top:614px;" width="74" height="19"><rect x="1.6" y="1.6" width="69.9" height="15" rx="7.5" fill="#dbeafe"/></svg>
<span class="a t" id="t147" style="left:193.45px;top:618.7px;font-size:8.8px;color:#2f5ae0;-webkit-text-stroke:0.15px #2f5ae0;letter-spacing:0.27px;">getUserMedia</span>
<svg class="a" style="left:280.74px;top:618.02px;overflow:visible" width="5.93" height="9.16" viewBox="0 0 7.5 11.6" fill="none" stroke="#5b93f7" stroke-width="0.95" stroke-linecap="round" stroke-linejoin="round"><rect x="1.9" y="0.45" width="3.7" height="7.9" rx="1.85"/><path d="M0.45 5.3v0.6a3.3 3.3 0 0 0 6.6 0v-0.6M3.75 9.2v1.95M1.6 11.15h4.3"/></svg>
<span class="a t" id="t148" style="left:291.09px;top:618.72px;font-size:10.1px;color:#1f2937;letter-spacing:-0.06px;">Logi Dock</span>
<span class="a t" id="t149" style="left:339.1px;top:618.65px;font-size:8.3px;color:#9ca3af;letter-spacing:0.08px;">(046d:0acc)</span>
<svg class="a" style="left:540.95px;top:619.58px;overflow:visible" width="8.8" height="6.24" viewBox="0 0 11 7.8" fill="none" stroke="#5b93f7" stroke-width="0.94" stroke-linecap="round" stroke-linejoin="round"><rect x="0.45" y="0.45" width="7.1" height="6.9" rx="1.5"/><path d="M7.55 3.0L10.5 0.65V7.15L7.55 4.8"/></svg>
<span class="a t" id="t150" style="left:553.39px;top:618.72px;font-size:10.1px;color:#1f2937;letter-spacing:-0.05px;">Logitech StreamCam</span>
<span class="a t" id="t151" style="left:649.7px;top:618.7px;font-size:8.4px;color:#9ca3af;letter-spacing:0.03px;">(046d:0893)</span>
<svg class="a" style="left:803.75px;top:618.4px;overflow:visible" width="8.2" height="8.2" viewBox="0 0 8.2 8.2" fill="none" stroke="#3b82f6" stroke-width="0.9" stroke-linecap="round" stroke-linejoin="round"><circle cx="4.1" cy="4.1" r="3.6"/><ellipse cx="4.1" cy="4.1" rx="1.6" ry="3.6"/><path d="M0.5 4.1h7.2"/></svg>
<span class="a t" id="t152" style="left:816.5px;top:618.72px;font-size:10.1px;color:#1f2937;letter-spacing:-0.07px;">web.openrainbow.net</span>
<svg class="a" style="left:29.6px;top:642.15px" width="6.7" height="7.2" viewBox="0 0 10 10" preserveAspectRatio="none"><path d="M0 0L10 5L0 10z" fill="#111827"/></svg>
<span class="a t" id="t153" style="left:39.69px;top:641.72px;font-size:10.2px;color:#9ca3af;letter-spacing:-0.41px;">16:19:33.538</span>
<svg class="a" style="left:181px;top:638px;" width="85" height="19"><rect x="1" y="1.05" width="81" height="15.2" rx="7.6" fill="#dcfce7"/></svg>
<span class="a t" id="t154" style="left:188.15px;top:642.15px;font-size:8.8px;color:#1b8443;-webkit-text-stroke:0.15px #1b8443;letter-spacing:0.23px;">getDisplayMedia</span>
<svg class="a" style="left:540.95px;top:643.13px;overflow:visible" width="8.8" height="6.24" viewBox="0 0 11 7.8" fill="none" stroke="#5b93f7" stroke-width="0.94" stroke-linecap="round" stroke-linejoin="round"><rect x="0.45" y="0.45" width="7.1" height="6.9" rx="1.5"/><path d="M7.55 3.0L10.5 0.65V7.15L7.55 4.8"/></svg>
<span class="a t" id="t155" style="left:554px;top:641.52px;font-size:10.1px;color:#1f2937;letter-spacing:-0.23px;">screen:1:0</span>
<svg class="a" style="left:803.75px;top:641.95px;overflow:visible" width="8.2" height="8.2" viewBox="0 0 8.2 8.2" fill="none" stroke="#3b82f6" stroke-width="0.9" stroke-linecap="round" stroke-linejoin="round"><circle cx="4.1" cy="4.1" r="3.6"/><ellipse cx="4.1" cy="4.1" rx="1.6" ry="3.6"/><path d="M0.5 4.1h7.2"/></svg>
<span class="a t" id="t156" style="left:816.5px;top:641.52px;font-size:10.1px;color:#1f2937;letter-spacing:-0.07px;">web.openrainbow.net</span>
<svg class="a" style="left:29.6px;top:665.7px" width="6.7" height="7.2" viewBox="0 0 10 10" preserveAspectRatio="none"><path d="M0 0L10 5L0 10z" fill="#111827"/></svg>
<span class="a t" id="t157" style="left:39.69px;top:665.52px;font-size:10.2px;color:#9ca3af;letter-spacing:-0.21px;">16:22:03.034</span>
<svg class="a" style="left:186px;top:661px;" width="74" height="19"><rect x="1.6" y="1.7" width="69.9" height="15" rx="7.5" fill="#dbeafe"/></svg>
<span class="a t" id="t158" style="left:193.45px;top:665.8px;font-size:8.8px;color:#2f5ae0;-webkit-text-stroke:0.15px #2f5ae0;letter-spacing:0.27px;">getUserMedia</span>
<svg class="a" style="left:280.74px;top:665.12px;overflow:visible" width="5.93" height="9.16" viewBox="0 0 7.5 11.6" fill="none" stroke="#5b93f7" stroke-width="0.95" stroke-linecap="round" stroke-linejoin="round"><rect x="1.9" y="0.45" width="3.7" height="7.9" rx="1.85"/><path d="M0.45 5.3v0.6a3.3 3.3 0 0 0 6.6 0v-0.6M3.75 9.2v1.95M1.6 11.15h4.3"/></svg>
<span class="a t" id="t159" style="left:291.09px;top:665.57px;font-size:10.1px;color:#1f2937;letter-spacing:-0.06px;">Logi Dock</span>
<span class="a t" id="t160" style="left:339.1px;top:665.75px;font-size:8.3px;color:#9ca3af;letter-spacing:0.08px;">(046d:0acc)</span>
<svg class="a" style="left:540.95px;top:666.68px;overflow:visible" width="8.8" height="6.24" viewBox="0 0 11 7.8" fill="none" stroke="#5b93f7" stroke-width="0.94" stroke-linecap="round" stroke-linejoin="round"><rect x="0.45" y="0.45" width="7.1" height="6.9" rx="1.5"/><path d="M7.55 3.0L10.5 0.65V7.15L7.55 4.8"/></svg>
<span class="a t" id="t161" style="left:553.39px;top:665.57px;font-size:10.1px;color:#1f2937;letter-spacing:-0.05px;">Logitech StreamCam</span>
<span class="a t" id="t162" style="left:649.7px;top:665.8px;font-size:8.4px;color:#9ca3af;letter-spacing:0.03px;">(046d:0893)</span>
<svg class="a" style="left:803.75px;top:665.5px;overflow:visible" width="8.2" height="8.2" viewBox="0 0 8.2 8.2" fill="none" stroke="#3b82f6" stroke-width="0.9" stroke-linecap="round" stroke-linejoin="round"><circle cx="4.1" cy="4.1" r="3.6"/><ellipse cx="4.1" cy="4.1" rx="1.6" ry="3.6"/><path d="M0.5 4.1h7.2"/></svg>
<span class="a t" id="t163" style="left:816.5px;top:665.57px;font-size:10.1px;color:#1f2937;letter-spacing:-0.07px;">web.openrainbow.net</span>
<svg class="a" style="left:29.6px;top:689.25px" width="6.7" height="7.2" viewBox="0 0 10 10" preserveAspectRatio="none"><path d="M0 0L10 5L0 10z" fill="#111827"/></svg>
<span class="a t" id="t164" style="left:39.69px;top:689.57px;font-size:10.2px;color:#9ca3af;letter-spacing:-0.2px;">16:22:24.828</span>
<svg class="a" style="left:181px;top:685px;" width="85" height="19"><rect x="1" y="1.15" width="81" height="15.2" rx="7.6" fill="#dcfce7"/></svg>
<span class="a t" id="t165" style="left:188.15px;top:689.5px;font-size:8.8px;color:#1b8443;-webkit-text-stroke:0.15px #1b8443;letter-spacing:0.23px;">getDisplayMedia</span>
<svg class="a" style="left:540.95px;top:690.23px;overflow:visible" width="8.8" height="6.24" viewBox="0 0 11 7.8" fill="none" stroke="#5b93f7" stroke-width="0.94" stroke-linecap="round" stroke-linejoin="round"><rect x="0.45" y="0.45" width="7.1" height="6.9" rx="1.5"/><path d="M7.55 3.0L10.5 0.65V7.15L7.55 4.8"/></svg>
<span class="a t" id="t166" style="left:554px;top:689.62px;font-size:10.1px;color:#1f2937;letter-spacing:0.04px;">screen:2:0</span>
<svg class="a" style="left:803.75px;top:689.05px;overflow:visible" width="8.2" height="8.2" viewBox="0 0 8.2 8.2" fill="none" stroke="#3b82f6" stroke-width="0.9" stroke-linecap="round" stroke-linejoin="round"><circle cx="4.1" cy="4.1" r="3.6"/><ellipse cx="4.1" cy="4.1" rx="1.6" ry="3.6"/><path d="M0.5 4.1h7.2"/></svg>
<span class="a t" id="t167" style="left:816.5px;top:689.62px;font-size:10.1px;color:#1f2937;letter-spacing:-0.07px;">web.openrainbow.net</span>
</body></html>
